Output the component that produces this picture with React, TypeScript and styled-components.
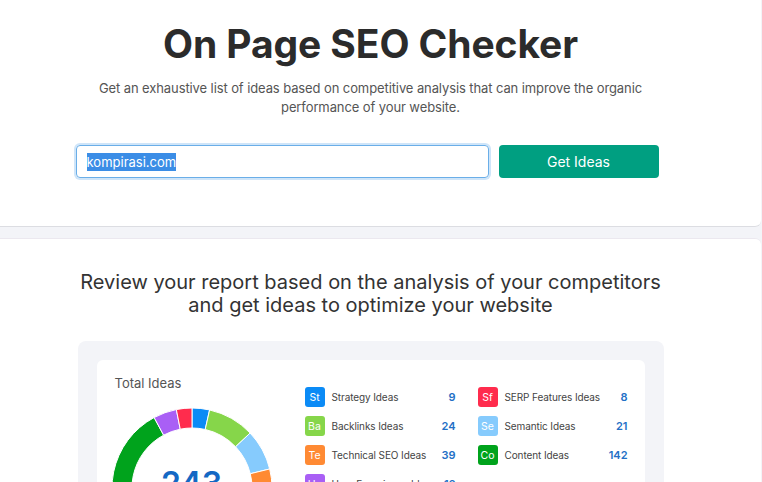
import React from 'react'
import styled, { createGlobalStyle } from 'styled-components'

const GlobalStyle = createGlobalStyle`
  html, body {
    margin: 0;
    padding: 0;
    background: #f3f4f8;
    font-family: Inter, "Noto Sans", Arial, sans-serif;
    color: #333;
  }
  * { box-sizing: border-box; }
`

const Page = styled.div`
  width: 762px;
  height: 482px;
  overflow: hidden;
  background: #f3f4f8;
`

const HeroCard = styled.section`
  background: #fff;
  height: 227px;
  border-bottom: 1px solid #dcdde2;
  border-bottom-right-radius: 6px;
  margin-right: 1px;
  padding: 21px 20px 0 0;
  display: flex;
  flex-direction: column;
  align-items: center;
`

const Title = styled.h1`
  margin: 0;
  font-size: 39px;
  line-height: 46px;
  font-weight: 700;
  color: #2b2b2b;
  letter-spacing: -0.1px;
`

const Lead = styled.p`
  margin: 12px 0 0;
  width: 560px;
  text-align: center;
  font-size: 13px;
  line-height: 19px;
  color: #555;
  letter-spacing: -0.1px;
`

const Form = styled.form`
  margin: 28px 7px 0 0;
  display: flex;
  gap: 10px;
  width: 583px;
`

const Input = styled.div`
  flex: 0 0 413px;
  height: 33px;
  border: 1px solid #6aaee8;
  border-radius: 4px;
  box-shadow: 0 0 0 2px #cfe5f9;
  display: flex;
  align-items: center;
  padding-left: 10px;
  font-size: 13px;
`

const Selected = styled.span`
  background: #3b8de6;
  color: #fff;
  line-height: 18px;
`

const Button = styled.button`
  flex: 1;
  height: 33px;
  border: none;
  border-radius: 4px;
  background: #009f81;
  color: #fff;
  font-family: inherit;
  font-size: 14px;
`

const ReportCard = styled.section`
  margin-top: 11px;
  margin-right: 1px;
  background: #fff;
  border-top: 1px solid #ebe8ef;
  border-top-right-radius: 6px;
  padding: 32px 20px 0 0;
  display: flex;
  flex-direction: column;
  align-items: center;
  height: 260px;
`

const Heading = styled.h2`
  margin: 0;
  font-size: 20px;
  line-height: 23px;
  font-weight: 400;
  color: #333;
  text-align: center;
`

const Panel = styled.div`
  margin-top: 24px;
  width: 586px;
  background: #f3f4f8;
  border-radius: 8px;
  padding: 19px 19px 0;
`

const Inner = styled.div`
  background: #fff;
  border-radius: 6px;
  padding: 15px 17px 0 16px;
  display: grid;
  grid-template-columns: 192px 1fr;
  height: 200px;
`

const ChartCol = styled.div`
  display: flex;
  flex-direction: column;
`

const ChartTitle = styled.div`
  font-size: 13px;
  line-height: 16px;
  color: #555;
  margin-left: 2px;
`

const Donut = styled.div`
  position: relative;
  width: 162px;
  height: 162px;
  margin-top: 16px;
  margin-left: -2px;
`

const Total = styled.div`
  position: absolute;
  left: 0;
  right: 0;
  top: 57px;
  text-align: center;
  font-size: 32px;
  font-weight: 600;
  color: #1468c4;
`

const Legend = styled.div`
  display: grid;
  grid-template-columns: 151px 150px;
  column-gap: 22px;
  row-gap: 9px;
  margin-top: 12px;
  align-content: start;
`

const Row = styled.div`
  display: flex;
  align-items: center;
  height: 20px;
`

const Badge = styled.span<{ $color: string }>`
  width: 20px;
  height: 20px;
  border-radius: 3px;
  background: ${p => p.$color};
  color: #fff;
  font-size: 10.5px;
  display: flex;
  align-items: center;
  justify-content: center;
  margin-right: 7px;
`

const Label = styled.span`
  flex: 1;
  font-size: 10px;
  color: #444;
  letter-spacing: -0.1px;
`

const Count = styled.span`
  font-size: 11px;
  font-weight: 600;
  color: #2370c6;
`

type Idea = { code: string; name: string; count: number; color: string }

const ideas: Idea[] = [
  { code: 'St', name: 'Strategy Ideas', count: 9, color: '#0b8bf6' },
  { code: 'Sf', name: 'SERP Features Ideas', count: 8, color: '#ff2c4d' },
  { code: 'Ba', name: 'Backlinks Ideas', count: 24, color: '#86d64a' },
  { code: 'Se', name: 'Semantic Ideas', count: 21, color: '#86cbfd' },
  { code: 'Te', name: 'Technical SEO Ideas', count: 39, color: '#ff8a33' },
  { code: 'Co', name: 'Content Ideas', count: 142, color: '#00a31c' },
  { code: 'Ux', name: 'User Experience Ideas', count: 12, color: '#a95ff5' },
]

const ringOrder = ['St', 'Ba', 'Se', 'Te', 'Co', 'Ux', 'Sf']

const arc = (cx: number, cy: number, r: number, r0: number, a0: number, a1: number) => {
  const pt = (rad: number, a: number) => [cx + rad * Math.sin(a), cy - rad * Math.cos(a)]
  const [x1, y1] = pt(r, a0)
  const [x2, y2] = pt(r, a1)
  const [x3, y3] = pt(r0, a1)
  const [x4, y4] = pt(r0, a0)
  const large = a1 - a0 > Math.PI ? 1 : 0
  return `M${x1} ${y1} A${r} ${r} 0 ${large} 1 ${x2} ${y2} L${x3} ${y3} A${r0} ${r0} 0 ${large} 0 ${x4} ${y4} Z`
}

const DonutChart: React.FC = () => {
  const items = ringOrder.map(c => ideas.find(i => i.code === c)!)
  const sum = items.reduce((s, i) => s + i.count, 0)
  let start = 0
  return (
    <svg width="162" height="162" viewBox="0 0 162 162">
      {items.map(i => {
        const end = start + (i.count / sum) * Math.PI * 2
        const d = arc(81, 81, 80, 60, start, end)
        start = end
        return <path key={i.code} d={d} fill={i.color} stroke="#fff" strokeWidth="1" />
      })}
    </svg>
  )
}

export default function App() {
  return (
    <Page>
      <GlobalStyle />
      <HeroCard>
        <Title>On Page SEO Checker</Title>
        <Lead>
          Get an exhaustive list of ideas based on competitive analysis that can improve the organic
          performance of your website.
        </Lead>
        <Form onSubmit={e => e.preventDefault()}>
          <Input>
            <Selected>kompirasi.com</Selected>
          </Input>
          <Button type="submit">Get Ideas</Button>
        </Form>
      </HeroCard>
      <ReportCard>
        <Heading>
          Review your report based on the analysis of your competitors
          <br />
          and get ideas to optimize your website
        </Heading>
        <Panel>
          <Inner>
            <ChartCol>
              <ChartTitle>Total Ideas</ChartTitle>
              <Donut>
                <DonutChart />
                <Total>243</Total>
              </Donut>
            </ChartCol>
            <Legend>
              {ideas.map(i => (
                <Row key={i.code}>
                  <Badge $color={i.color}>{i.code}</Badge>
                  <Label>{i.name}</Label>
                  <Count>{i.count}</Count>
                </Row>
              ))}
            </Legend>
          </Inner>
        </Panel>
      </ReportCard>
    </Page>
  )
}
